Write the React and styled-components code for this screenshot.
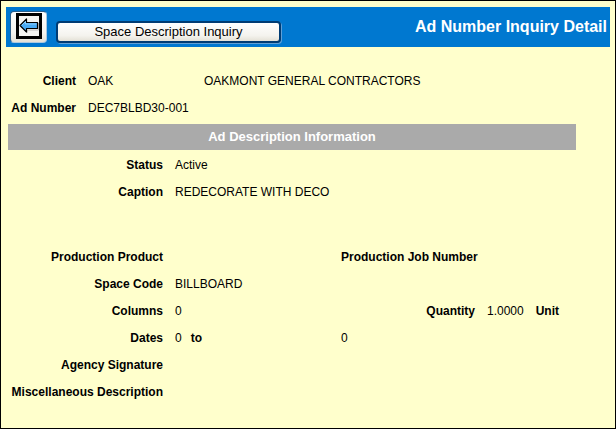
import React from "react";
import styled, { createGlobalStyle } from "styled-components";

const GlobalStyle = createGlobalStyle`
  * {
    box-sizing: border-box;
  }
  body {
    margin: 0;
    background-color: #ffffcc;
    color: #000;
    font-family: Arial, "Liberation Sans", sans-serif;
    font-size: 12px;
  }
`;

const PageStyled = styled.main`
  min-height: 100vh;
  padding: 6px 5px;
  border: 1px solid #000;
  background-color: #ffffcc;
`;

const HeaderStyled = styled.header`
  display: flex;
  align-items: flex-start;
  height: 40px;
  padding: 4px 3px 0 4px;
  background-color: #0078d0;
  .header-title {
    margin: 0 0 0 auto;
    padding-top: 6px;
    color: #fff;
    font-size: 16px;
    line-height: 20px;
    font-weight: 700;
    white-space: nowrap;
  }
`;

const ButtonStyled = styled.button`
  flex-shrink: 0;
  padding: 0;
  border: 1px solid #003c74;
  border-radius: 4px;
  background: linear-gradient(#ffffff, #f4f3ee 70%, #e4e1d6);
  color: #000;
  font-family: inherit;
  cursor: pointer;
`;

const BackButton = styled(ButtonStyled)`
  display: flex;
  justify-content: center;
  align-items: flex-start;
  width: 37px;
  height: 32px;
  padding-top: 1px;
  border-color: #2c5f8c #a9c9e2 #a9c9e2 #2c5f8c;
  svg {
    display: block;
    width: 26px;
    height: 26px;
  }
`;

const InquiryButton = styled(ButtonStyled)`
  width: 225px;
  height: 22px;
  margin: 10px 0 0 9px;
  border-width: 2px;
  font-size: 13px;
  line-height: 18px;
  box-shadow: 1px 1px 0 #5f9fd6;
`;

const ContentStyled = styled.div`
  padding: 21px 34px 0 2px;
`;

const FieldList = styled.dl`
  margin: 0;
  padding-bottom: ${(props) => (props.$spaced ? "38px" : "0")};
`;

const FieldRow = styled.div`
  display: grid;
  grid-template-columns: ${(props) =>
    props.$compact ? "68px 104px 1fr" : "155px 154px 134px 1fr"};
  column-gap: 12px;
  height: 27px;
  line-height: 27px;
  white-space: nowrap;
`;

const Label = styled.dt`
  font-weight: 700;
  text-align: right;
`;

const Value = styled.dd`
  display: flex;
  gap: ${(props) => (props.$wide ? "12px" : "9px")};
  margin: 0;
`;

const SectionTitle = styled.h2`
  margin: 2px 0;
  background-color: #aaaaaa;
  color: #fff;
  font-size: 13px;
  line-height: 26px;
  font-weight: 700;
  text-align: center;
`;

const BackIcon = () => (
  <svg viewBox="0 0 26 26" aria-hidden="true">
    <rect width="26" height="26" fill="#000" />
    <rect x="3" y="3" width="20" height="20" fill="#f5f5f3" />
    <path
      d="M5 14 L11 20 V17 H22.5 V10"
      fill="none"
      stroke="#bbb"
      strokeWidth="1"
    />
    <path
      d="M4 12.5 L10.5 6 V9.5 H21.5 V15.5 H10.5 V19 Z"
      fill="#48aaf5"
      stroke="#000"
      strokeWidth="1.2"
      strokeLinejoin="round"
    />
    <path d="M6 12 L9.5 8.5 V11 H20.5" fill="none" stroke="#8accfa" />
  </svg>
);

const App = () => {
  return (
    <>
      <GlobalStyle />
      <PageStyled>
        <HeaderStyled>
          <BackButton type="button" aria-label="Back">
            <BackIcon />
          </BackButton>
          <InquiryButton type="button">Space Description Inquiry</InquiryButton>
          <h1 className="header-title">Ad Number Inquiry Detail</h1>
        </HeaderStyled>
        <ContentStyled>
          <FieldList>
            <FieldRow $compact>
              <Label>Client</Label>
              <Value>OAK</Value>
              <Value>OAKMONT GENERAL CONTRACTORS</Value>
            </FieldRow>
            <FieldRow $compact>
              <Label>Ad Number</Label>
              <Value>DEC7BLBD30-001</Value>
            </FieldRow>
          </FieldList>
          <SectionTitle>Ad Description Information</SectionTitle>
          <FieldList $spaced>
            <FieldRow>
              <Label>Status</Label>
              <Value>Active</Value>
            </FieldRow>
            <FieldRow>
              <Label>Caption</Label>
              <Value>REDECORATE WITH DECO</Value>
            </FieldRow>
          </FieldList>
          <FieldList>
            <FieldRow>
              <Label>Production Product</Label>
              <Value />
              <Label>Production Job Number</Label>
              <Value />
            </FieldRow>
            <FieldRow>
              <Label>Space Code</Label>
              <Value>BILLBOARD</Value>
            </FieldRow>
            <FieldRow>
              <Label>Columns</Label>
              <Value>0</Value>
              <Label>Quantity</Label>
              <Value $wide>
                <span>1.0000</span>
                <strong>Unit</strong>
              </Value>
            </FieldRow>
            <FieldRow>
              <Label>Dates</Label>
              <Value>
                <span>0</span>
                <strong>to</strong>
              </Value>
              <Value>0</Value>
            </FieldRow>
            <FieldRow>
              <Label>Agency Signature</Label>
              <Value />
            </FieldRow>
            <FieldRow>
              <Label>Miscellaneous Description</Label>
              <Value />
            </FieldRow>
          </FieldList>
        </ContentStyled>
      </PageStyled>
    </>
  );
};

export default App;
